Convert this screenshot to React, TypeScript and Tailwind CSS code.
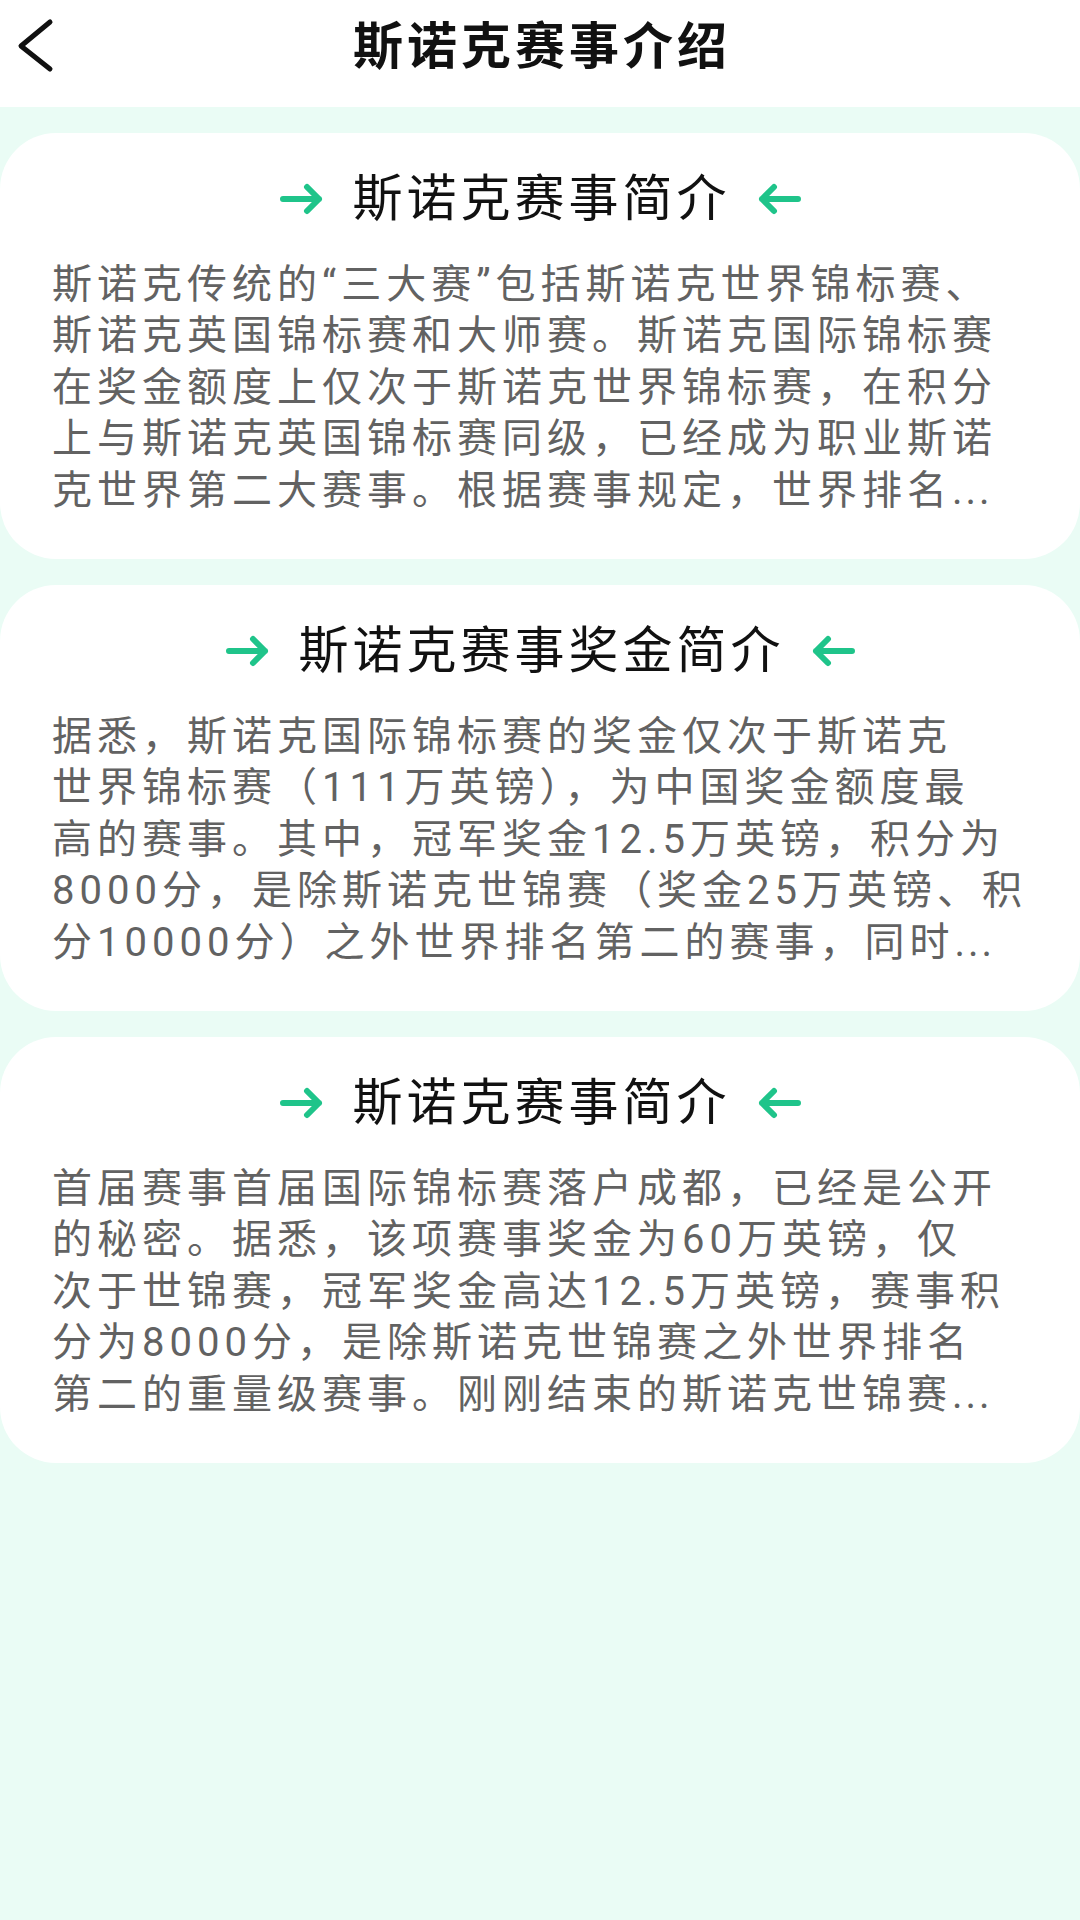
import React from "react";

type Card = { title: string; lines: string[] };

const cards: Card[] = [
  {
    title: "斯诺克赛事简介",
    lines: [
      "斯诺克传统的“三大赛”包括斯诺克世界锦标赛、",
      "斯诺克英国锦标赛和大师赛。斯诺克国际锦标赛",
      "在奖金额度上仅次于斯诺克世界锦标赛，在积分",
      "上与斯诺克英国锦标赛同级，已经成为职业斯诺",
      "克世界第二大赛事。根据赛事规定，世界排名...",
    ],
  },
  {
    title: "斯诺克赛事奖金简介",
    lines: [
      "据悉，斯诺克国际锦标赛的奖金仅次于斯诺克",
      "世界锦标赛（111万英镑），为中国奖金额度最",
      "高的赛事。其中，冠军奖金12.5万英镑，积分为",
      "8000分，是除斯诺克世锦赛（奖金25万英镑、积",
      "分10000分）之外世界排名第二的赛事，同时...",
    ],
  },
  {
    title: "斯诺克赛事简介",
    lines: [
      "首届赛事首届国际锦标赛落户成都，已经是公开",
      "的秘密。据悉，该项赛事奖金为60万英镑，仅",
      "次于世锦赛，冠军奖金高达12.5万英镑，赛事积",
      "分为8000分，是除斯诺克世锦赛之外世界排名",
      "第二的重量级赛事。刚刚结束的斯诺克世锦赛...",
    ],
  },
];

function Line({ text }: { text: string }) {
  const m = text.match(/^(.*?)(\.\.\.)?$/);
  const main = m ? m[1] : text;
  const dots = m && m[2];
  return (
    <div className="whitespace-nowrap">
      {main}
      {dots ? <span className="tracking-[3px]">...</span> : null}
    </div>
  );
}

function Arrow({ left }: { left?: boolean }) {
  return (
    <svg
      width="44"
      height="32"
      viewBox="0 0 44 32"
      fill="none"
      stroke="#1fc48a"
      strokeWidth="6"
      strokeLinecap="round"
      strokeLinejoin="round"
      className={left ? "-scale-x-100 shrink-0" : "shrink-0"}
    >
      <path d="M4 16H40M28 4L40 16L28 28" />
    </svg>
  );
}

export default function App() {
  return (
    <div className="min-h-screen w-full bg-[#eafcf5] font-['Roboto','Noto_Sans_CJK_SC',sans-serif]">
      <div className="relative flex h-[107px] items-center justify-center bg-white">
        <svg
          width="40"
          height="60"
          viewBox="0 0 40 60"
          fill="none"
          stroke="#111"
          strokeWidth="5"
          strokeLinecap="round"
          strokeLinejoin="round"
          className="absolute left-[14px] top-[16px]"
        >
          <path d="M36 6L7 30L36 53" />
        </svg>
        <div className="pb-[13px] pl-[4px] text-[50px] font-bold leading-[60px] tracking-[4px] text-[#111]">
          斯诺克赛事介绍
        </div>
      </div>
      <div className="flex flex-col gap-[26px] pt-[26px]">
        {cards.map((c, i) => (
          <div
            key={i}
            className="flex h-[426px] flex-col rounded-[56px] bg-white pt-[36px]"
          >
            <div className="flex h-[60px] items-center justify-center">
              <Arrow />
              <span className="ml-[30px] mr-[27px] text-[50px] leading-[60px] tracking-[4px] text-[#111]">
                {c.title}
              </span>
              <Arrow left />
            </div>
            <div className="mt-[30px] pl-[52px] text-[40px] leading-[51.4px] tracking-[5px] text-[#626262]">
              {c.lines.map((l, j) => (
                <Line key={j} text={l} />
              ))}
            </div>
          </div>
        ))}
      </div>
    </div>
  );
}
